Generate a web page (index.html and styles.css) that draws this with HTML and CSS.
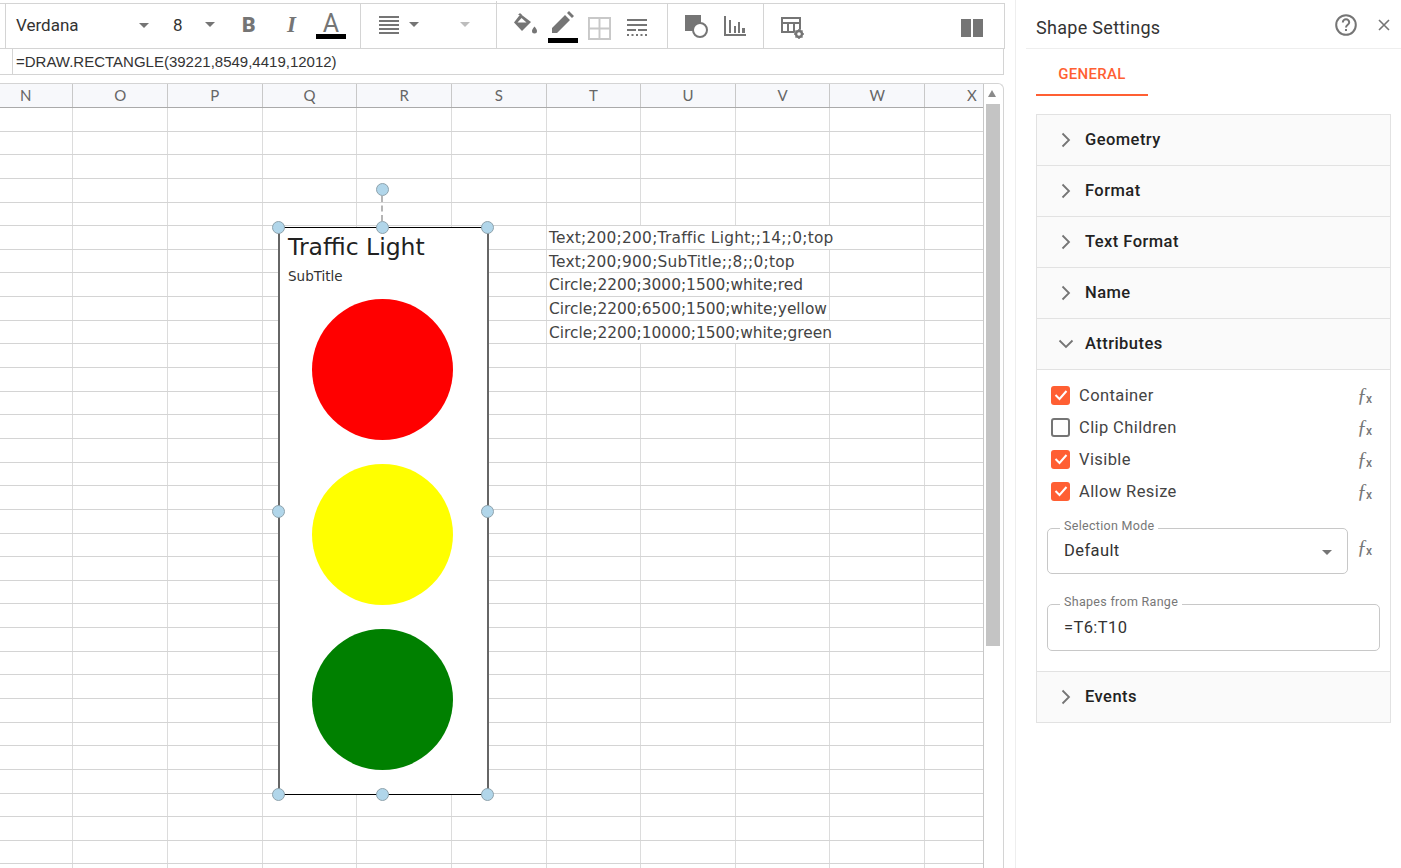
FILE: index.html
```html
<!DOCTYPE html>
<html lang="en">
<head>
  <meta charset="UTF-8">
  <title>Shape Settings</title>
  <link rel="stylesheet" href="styles.css">
</head>
<body>
  <div class="app">
    <div class="main">
      <!-- toolbar -->
      <div class="toolbar">
        <div class="tb-edge"></div>
        <div class="tb-group tb-font">
          <span class="font-name">Verdana</span>
          <span class="caret caret-name"></span>
          <span class="font-size">8</span>
          <span class="caret caret-size"></span>
          <span class="tb-letter tb-bold">B</span>
          <span class="tb-letter tb-italic">I</span>
          <span class="tb-color">
            <span class="tb-a">A</span>
            <span class="color-bar"></span>
          </span>
        </div>
        <div class="tb-group tb-align">
          <svg width="20" height="20" viewBox="0 0 20 20"><path d="M0 1h20v2H0zM0 5h20v2H0zM0 9h20v2H0zM0 13h20v2H0zM0 17h20v2H0z" fill="#757575"/></svg>
          <span class="caret caret-align"></span>
          <span class="caret caret-off"></span>
        </div>
        <div class="tb-group tb-format">
          <svg class="ic-fill" width="26" height="22" viewBox="0 0 26 22"><path d="M7 0 9 2 5 2 Z" fill="#757575"/><path d="M7.500 1 1 9.500l8 8.500 9-9z" fill="#757575"/><path d="M4.500 9.500 8.500 5l5 4.500z" fill="#fff"/><path d="M21.500 13.500c1.500 2 2.500 3.200 2.500 4.500a2.500 2.500 0 0 1-5 0c0-1.300 1-2.500 2.500-4.500z" fill="#757575"/></svg>
          <span class="tb-color tb-pen">
            <svg width="22" height="22" viewBox="0 0 22 22"><path d="M0 22v-5L13 4l5 5L5 22zM15 2l2-2 5 5-2 2z" fill="#757575"/></svg>
            <span class="color-bar"></span>
          </span>
          <svg class="ic-borders" width="24" height="24" viewBox="0 0 24 24"><path d="M1 1h22v22H1zM12 1v22M1 12h22" fill="none" stroke="#c8c8c8" stroke-width="2"/></svg>
          <svg class="ic-lines" width="20" height="18" viewBox="0 0 20 18"><path d="M0 1h20v2H0zM0 6h20v2H0z" fill="#757575"/><path d="M0 11h9v2H0zM11 11h9v2h-9z" fill="#757575"/><path d="M0 16h2v2H0zM4.500 16h2v2h-2zM9 16h2v2H9zM13.500 16h2v2h-2zM18 16h2v2h-2z" fill="#757575"/></svg>
        </div>
        <div class="tb-group tb-insert">
          <svg width="23" height="23" viewBox="0 0 23 23"><path d="M0 0h16v16H0z" fill="#757575"/><circle cx="15" cy="15" r="7" fill="#fff" stroke="#757575" stroke-width="2"/></svg>
          <svg width="22" height="20" viewBox="0 0 22 20"><path d="M0 0h2v18h20v2H0zM5 4h2v13H5zM10 10h2v7h-2zM14 6h2v11h-2zM18 12h3v5h-3z" fill="#757575"/></svg>
        </div>
        <div class="tb-group tb-end">
          <svg width="24" height="22" viewBox="0 0 24 22"><path d="M2 1h18v14H2zM2 6h18M8 6v9M14 6v9" fill="none" stroke="#757575" stroke-width="2"/><circle cx="19" cy="17" r="4.500" fill="#fff"/><circle cx="19" cy="17" r="3" fill="none" stroke="#757575" stroke-width="2.400"/><path d="M19 12v2M19 20v2M14 17h2M22 17h2M15.500 13.500l1.400 1.400M21.100 19.100l1.400 1.400M22.500 13.500l-1.400 1.400M16.900 19.100l-1.400 1.400" stroke="#757575" stroke-width="1.500"/></svg>
          <span class="pause"><i></i><i></i></span>
        </div>
      </div>

      <!-- formula bar -->
      <div class="formula">
        <div class="formula-name"></div>
        <div class="formula-text">=DRAW.RECTANGLE(39221,8549,4419,12012)</div>
      </div>

      <!-- sheet -->
      <div class="sheet">
        <div class="sheet-area">
          <div class="col-head">
            <div class="col">N</div>
            <div class="col">O</div>
            <div class="col">P</div>
            <div class="col">Q</div>
            <div class="col">R</div>
            <div class="col">S</div>
            <div class="col">T</div>
            <div class="col">U</div>
            <div class="col">V</div>
            <div class="col">W</div>
            <div class="col">X</div>
          </div>
          <div class="grid">
            <div class="cells">
              <div class="cell span-long cell-wide">Text;200;200;Traffic Light;;14;;0;top</div>
              <div class="cell span-short cell-wide">Text;200;900;SubTitle;;8;;0;top</div>
              <div class="cell span-short">Circle;2200;3000;1500;white;red</div>
              <div class="cell span-short">Circle;2200;6500;1500;white;yellow</div>
              <div class="cell span-long">Circle;2200;10000;1500;white;green</div>
            </div>

            <!-- selected shape -->
            <div class="shape">
              <div class="shape-title">Traffic Light</div>
              <div class="shape-sub">SubTitle</div>
              <div class="lights">
                <div class="light red"></div>
                <div class="light yellow"></div>
                <div class="light green"></div>
              </div>
              <div class="rotate-line"></div>
              <div class="handle h-rotate"></div>
              <div class="handle h-tl"></div>
              <div class="handle h-tc"></div>
              <div class="handle h-tr"></div>
              <div class="handle h-ml"></div>
              <div class="handle h-mr"></div>
              <div class="handle h-bl"></div>
              <div class="handle h-bc"></div>
              <div class="handle h-br"></div>
            </div>
          </div>
        </div>
        <div class="scrollbar">
          <div class="scroll-up"></div>
          <div class="scroll-thumb"></div>
        </div>
      </div>
    </div>

    <!-- side panel -->
    <div class="panel">
      <div class="panel-head">
        <span class="panel-title">Shape Settings</span>
        <svg class="ic-help" width="24" height="24" viewBox="0 0 24 24"><circle cx="12" cy="12" r="9.800" fill="none" stroke="#757575" stroke-width="2"/><path d="M8.800 9.500a3.200 3.200 0 0 1 6.400 0c0 2.300-3.200 2.400-3.200 5" fill="none" stroke="#757575" stroke-width="2"/><path d="M11 16h2v2h-2z" fill="#757575"/></svg>
        <svg class="ic-close" width="12" height="12" viewBox="0 0 12 12"><path d="M1 1l10 10M11 1 1 11" stroke="#757575" stroke-width="1.600"/></svg>
      </div>
      <div class="tabs"><div class="tab">GENERAL</div></div>

      <div class="accordion">
        <div class="acc-head">
          <svg class="chev" width="10" height="16" viewBox="0 0 10 16"><path d="M1.500 1.500 8 8l-6.500 6.500" fill="none" stroke="#757575" stroke-width="1.800"/></svg>
          Geometry
        </div>
        <div class="acc-head">
          <svg class="chev" width="10" height="16" viewBox="0 0 10 16"><path d="M1.500 1.500 8 8l-6.500 6.500" fill="none" stroke="#757575" stroke-width="1.800"/></svg>
          Format
        </div>
        <div class="acc-head">
          <svg class="chev" width="10" height="16" viewBox="0 0 10 16"><path d="M1.500 1.500 8 8l-6.500 6.500" fill="none" stroke="#757575" stroke-width="1.800"/></svg>
          Text Format
        </div>
        <div class="acc-head">
          <svg class="chev" width="10" height="16" viewBox="0 0 10 16"><path d="M1.500 1.500 8 8l-6.500 6.500" fill="none" stroke="#757575" stroke-width="1.800"/></svg>
          Name
        </div>
        <div class="acc-head acc-open">
          <svg class="chev-down" width="16" height="10" viewBox="0 0 16 10"><path d="M1.500 1.500 8 8l6.500-6.500" fill="none" stroke="#757575" stroke-width="1.800"/></svg>
          Attributes
        </div>
        <div class="acc-body">
          <div class="check-row">
            <span class="check on"><svg width="14" height="12" viewBox="0 0 14 12"><path d="M1.500 6 5.500 10l7-8" fill="none" stroke="#fff" stroke-width="2"/></svg></span>
            <span class="check-label">Container</span>
            <span class="fx">ƒ<sub>x</sub></span>
          </div>
          <div class="check-row">
            <span class="check"></span>
            <span class="check-label">Clip Children</span>
            <span class="fx">ƒ<sub>x</sub></span>
          </div>
          <div class="check-row">
            <span class="check on"><svg width="14" height="12" viewBox="0 0 14 12"><path d="M1.500 6 5.500 10l7-8" fill="none" stroke="#fff" stroke-width="2"/></svg></span>
            <span class="check-label">Visible</span>
            <span class="fx">ƒ<sub>x</sub></span>
          </div>
          <div class="check-row">
            <span class="check on"><svg width="14" height="12" viewBox="0 0 14 12"><path d="M1.500 6 5.500 10l7-8" fill="none" stroke="#fff" stroke-width="2"/></svg></span>
            <span class="check-label">Allow Resize</span>
            <span class="fx">ƒ<sub>x</sub></span>
          </div>

          <div class="field-row">
            <div class="field field-select">
              <span class="field-legend">Selection Mode</span>
              <span class="field-value">Default</span>
              <span class="caret caret-select"></span>
            </div>
            <span class="fx">ƒ<sub>x</sub></span>
          </div>
          <div class="field field-input">
            <span class="field-legend">Shapes from Range</span>
            <span class="field-value">=T6:T10</span>
          </div>
        </div>
        <div class="acc-head">
          <svg class="chev" width="10" height="16" viewBox="0 0 10 16"><path d="M1.500 1.500 8 8l-6.500 6.500" fill="none" stroke="#757575" stroke-width="1.800"/></svg>
          Events
        </div>
      </div>
    </div>
  </div>
</body>
</html>
```

FILE: styles.css
```css
html, body {
  margin: 0;
  height: 100%;
  overflow: hidden;
  background: #fff;
}

.app {
  display: flex;
  width: 1401px;
  height: 868px;
  font-family: Roboto, sans-serif;
}

.main {
  width: 1015px;
  flex: none;
  border-right: 1px solid #eee;
}

/* toolbar */
.toolbar {
  display: flex;
  height: 44px;
  margin: 3px 10px 0 0;
  border-top: 1px solid #d4d4d4;
  border-right: 1px solid #d4d4d4;
  border-bottom: 1px solid #d4d4d4;
}

.tb-edge {
  width: 5px;
  border-right: 1px solid #d4d4d4;
}

.tb-group {
  display: flex;
  align-items: center;
  border-right: 1px solid #d4d4d4;
  box-sizing: border-box;
}

.tb-font {
  width: 355px;
  padding-left: 10px;
}

.tb-align {
  width: 136px;
  padding-left: 18px;
  margin-top: -3px;
  height: 47px;
  border-right: 1px solid #d4d4d4;
}

.tb-format {
  width: 171px;
  padding-left: 16px;
}

.tb-insert {
  width: 96px;
  padding-left: 17px;
  gap: 16px;
}

.tb-end {
  flex: 1;
  border-right: 0;
  padding: 0 21px 0 16px;
  justify-content: space-between;
}

.font-name {
  width: 123px;
  font-size: 17px;
  color: #333;
  margin-top: -2px;
}

.font-size {
  width: 35px;
  font-size: 17px;
  color: #333;
  margin-top: -2px;
  padding-left: 3px;
  box-sizing: border-box;
}

.caret {
  display: block;
  width: 0;
  height: 0;
  border-left: 5.500px solid transparent;
  border-right: 5.500px solid transparent;
  border-top: 5.500px solid #757575;
}

.caret-name {
  margin: -2px 21px 0 0;
}

.caret-size {
  margin: -4px 27px 0 0;
}

.tb-letter {
  font-size: 21px;
  color: #757575;
  margin-top: -2px;
}

.tb-bold {
  width: 45px;
  font-weight: 900;
}

.tb-italic {
  width: 23px;
  font-weight: 900;
  font-style: italic;
  font-family: "Liberation Serif", serif;
  font-size: 23px;
}

.tb-color {
  position: relative;
  display: flex;
  flex-direction: column;
  align-items: center;
  width: 30px;
  margin-left: 6px;
}

.tb-a {
  font-size: 25px;
  line-height: 26px;
  color: #757575;
  margin-top: -4px;
}

.color-bar {
  position: absolute;
  left: 0;
  top: 19px;
  width: 30px;
  height: 5px;
  background: #000;
}

.caret-align {
  margin: 0 0 0 10px;
}

.caret-off {
  margin: 0 0 0 41px;
  border-top-color: #bdbdbd;
}

.ic-fill {
  margin-top: -4px;
}

.tb-pen {
  margin-left: 9px;
}

.tb-pen svg {
  margin-top: -8px;
}

.tb-pen .color-bar {
  top: 19px;
}

.ic-borders {
  width: 23px;
  height: 23px;
  margin: 4px 0 0 10px;
}

.ic-lines {
  margin: 2px 0 0 16px;
}

.tb-end svg {
  margin-top: 4px;
}

.pause {
  display: flex;
  gap: 2px;
  margin-top: 3px;
}

.pause i {
  display: block;
  width: 10px;
  height: 18px;
  background: #757575;
}

/* formula bar */
.formula {
  display: flex;
  height: 25px;
  margin-right: 11px;
  border-right: 1px solid #d4d4d4;
  border-bottom: 1px solid #d4d4d4;
}

.formula-name {
  width: 12px;
  border-right: 1px solid #d4d4d4;
}

.formula-text {
  padding: 4px 0 0 3px;
  font-family: "Liberation Sans", sans-serif;
  font-size: 15px;
  color: #333;
}

/* sheet */
.sheet {
  display: flex;
  height: 785px;
  margin: 8px 11px 0 0;
  border-top: 1px solid #d4d4d4;
  border-right: 1px solid #d4d4d4;
  border-top-right-radius: 6px;
  overflow: hidden;
}

.sheet-area {
  width: 983px;
  flex: none;
}

.col-head {
  display: flex;
  height: 23px;
  margin-left: -21.200px;
  background: #f7f8fb;
  border-bottom: 1px solid #aaa;
}

.col {
  flex: 0 0 94.630px;
  box-sizing: border-box;
  border-right: 1px solid #c8c8c8;
  text-align: center;
  font-family: Lato, sans-serif;
  font-size: 15px;
  line-height: 23px;
  color: #666;
}

.grid {
  position: relative;
  height: 761px;
  padding-top: 118px;
  box-sizing: border-box;
  background:
    repeating-linear-gradient(to bottom, transparent 0, transparent 22.640px, #d4d4d4 22.640px, #d4d4d4 23.640px),
    repeating-linear-gradient(to right, #dcdcdc -22.200px, #dcdcdc -21.200px, transparent -21.200px, transparent 72.430px);
}

.cells {
  margin-left: 547px;
}

.cell {
  height: 22.640px;
  margin-bottom: 1px;
  padding-left: 2px;
  box-sizing: border-box;
  background: #fff;
  font-family: "DejaVu Sans", sans-serif;
  font-size: 15.400px;
  line-height: 24px;
  color: #444;
  white-space: nowrap;
}

.cell-wide {
  letter-spacing: 0.240px;
}

.span-long {
  width: 377px;
}

.span-short {
  width: 282px;
}

/* shape on the sheet */
.shape {
  position: absolute;
  left: 278px;
  top: 119px;
  width: 211px;
  height: 568px;
  box-sizing: border-box;
  background: #fff;
  border-top: 1px solid #000;
  border-bottom: 1px solid #000;
  border-left: 2px solid #666;
  border-right: 2px solid #666;
  font-family: "DejaVu Sans", sans-serif;
}

.shape-title {
  padding: 4px 0 0 8px;
  font-size: 23.500px;
  line-height: 30px;
  color: #222;
}

.shape-sub {
  padding: 6px 0 0 8px;
  font-size: 13.500px;
  line-height: 16px;
  color: #333;
}

.lights {
  display: flex;
  flex-direction: column;
  align-items: center;
  gap: 24px;
  margin-top: 15px;
  padding-right: 2px;
}

.light {
  width: 141px;
  height: 141px;
  border-radius: 50%;
}

.red { background: #f00; }
.yellow { background: #ff0; }
.green { background: #008000; }

.handle {
  position: absolute;
  width: 13px;
  height: 13px;
  box-sizing: border-box;
  border: 1px solid #8fa3ad;
  border-radius: 50%;
  background: #b1d6ea;
}

.h-rotate { left: 96px; top: -45px; }
.h-tl { left: -8px; top: -7px; }
.h-tc { left: 96px; top: -7px; }
.h-tr { left: 201px; top: -7px; }
.h-ml { left: -8px; top: 277px; }
.h-mr { left: 201px; top: 277px; }
.h-bl { left: -8px; top: 560px; }
.h-bc { left: 96px; top: 560px; }
.h-br { left: 201px; top: 560px; }

.rotate-line {
  position: absolute;
  left: 101px;
  top: -32px;
  height: 25px;
  border-left: 2px dashed #b5b5b5;
}

/* scrollbar */
.scrollbar {
  flex: 1;
  border-left: 1px solid #c8c8c8;
  padding-top: 6px;
}

.scroll-up {
  width: 0;
  height: 0;
  margin-left: 4px;
  border-left: 4.500px solid transparent;
  border-right: 4.500px solid transparent;
  border-bottom: 7px solid #8a8a8a;
}

.scroll-thumb {
  width: 14px;
  height: 542px;
  margin: 7px 0 0 2px;
  background: #c4c4c4;
}

/* side panel */
.panel {
  flex: 1;
  padding-left: 10px;
  min-width: 0;
}

.panel-head {
  display: flex;
  align-items: center;
  height: 48px;
  padding-left: 10px;
  border-bottom: 1px solid #eee;
}

.panel-title {
  font-size: 18px;
  letter-spacing: 0.300px;
  color: #333;
  margin-top: 7px;
}

.ic-help {
  margin-left: 174px;
  margin-top: 2px;
}

.ic-close {
  margin-left: 20px;
  margin-top: 2px;
}

.tabs {
  height: 47px;
  padding-left: 10px;
}

.tab {
  width: 112px;
  height: 47px;
  box-sizing: border-box;
  border-bottom: 2px solid #ff5f33;
  text-align: center;
  font-size: 15px;
  font-weight: 500;
  letter-spacing: 0.300px;
  line-height: 50px;
  color: #ff5f33;
}

.accordion {
  width: 355px;
  box-sizing: border-box;
  margin: 18px 0 0 10px;
  border: 1px solid #e2e2e2;
}

.acc-head {
  position: relative;
  height: 51px;
  box-sizing: border-box;
  padding-left: 48px;
  background: #fafafa;
  border-bottom: 1px solid #e2e2e2;
  font-size: 16.500px;
  font-weight: 500;
  letter-spacing: 0.450px;
  line-height: 49px;
  color: #222;
}

.acc-head:last-child {
  height: 50px;
  border-bottom: 0;
}

.chev {
  position: absolute;
  left: 24px;
  top: 17px;
}

.chev-down {
  position: absolute;
  left: 21px;
  top: 20px;
}

.acc-body {
  height: 302px;
  box-sizing: border-box;
  padding: 9px 10px 0 10px;
  border-bottom: 1px solid #e2e2e2;
}

.check-row {
  display: flex;
  align-items: center;
  height: 32px;
  padding-left: 4px;
}

.check {
  display: flex;
  align-items: center;
  justify-content: center;
  flex: none;
  width: 19px;
  height: 19px;
  box-sizing: border-box;
  border: 2px solid #757575;
  border-radius: 3px;
}

.check.on {
  background: #ff5f33;
  border: 0;
}

.check-label {
  flex: 1;
  margin-left: 9px;
  font-size: 16.500px;
  letter-spacing: 0.400px;
  color: #444;
}

.fx {
  flex: none;
  width: 15px;
  margin-right: 8px;
  margin-left: -1px;
  font-family: "Liberation Serif", serif;
  font-style: italic;
  font-size: 20px;
  line-height: 20px;
  color: #777;
  white-space: nowrap;
}

.fx sub {
  margin-left: -1px;
  font-family: Roboto, sans-serif;
  font-style: normal;
  font-weight: 500;
  font-size: 12px;
  line-height: 0;
  vertical-align: -1px;
}

.field-row {
  display: flex;
  align-items: center;
  margin-top: 21px;
}

.field-row .fx {
  margin-left: 9px;
  margin-top: -8px;
}

.field {
  position: relative;
  box-sizing: border-box;
  border: 1px solid #c8c8c8;
  border-radius: 5px;
  padding-left: 16px;
  display: flex;
  align-items: center;
  font-size: 16.500px;
  letter-spacing: 0.400px;
  color: #333;
}

.field-value {
  margin-top: -2px;
}

.field-select {
  width: 301px;
  height: 46px;
}

.field-input {
  width: 333px;
  height: 47px;
  margin-top: 30px;
}

.field-input .field-value {
  margin-top: 0;
}

.field-legend {
  position: absolute;
  left: 12px;
  top: -11px;
  padding: 0 4px;
  background: #fff;
  font-size: 12.500px;
  letter-spacing: 0.300px;
  line-height: 16px;
  color: #777;
}

.caret-select {
  position: absolute;
  right: 15px;
  top: 21px;
}
```
